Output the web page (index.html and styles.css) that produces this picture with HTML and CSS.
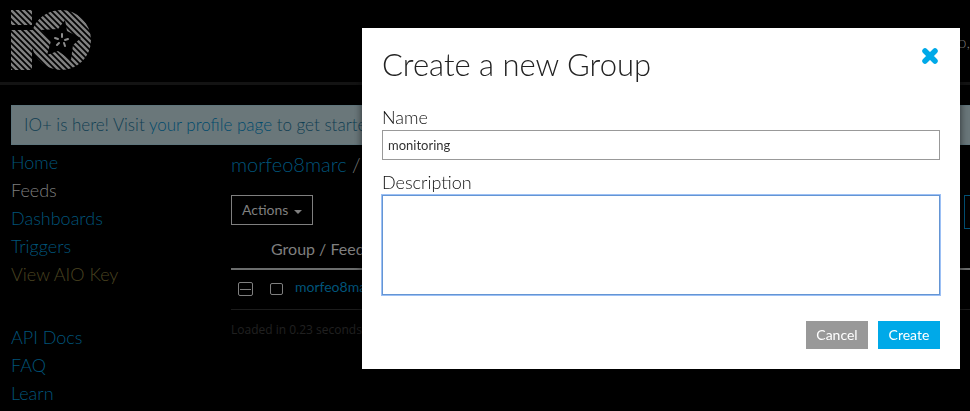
FILE: index.html
```html
<!DOCTYPE html>
<html lang="en">
<head>
<meta charset="utf-8">
<title>Create a new Group</title>
<link rel="stylesheet" href="styles.css">
</head>
<body>
<div class="page">
  <header class="topbar">
    <a class="logo" href="#" aria-label="IO home">
      <svg width="80" height="60" viewBox="0 0 80 60">
        <defs>
          <pattern id="stripes" width="6" height="6" patternUnits="userSpaceOnUse">
            <path d="M-6 -6L12 12M-6 0L6 12M0 -6L12 6" stroke="#808080" stroke-width="2.5"/>
          </pattern>
        </defs>
        <path fill="url(#stripes)" d="M0 0H21V15H0ZM0 20H26L21 40V60H0ZM50 0A30 30 0 1 1 50 60A30 30 0 0 1 21 37V22A30 30 0 0 1 50 0Z"/>
        <path fill="#000" d="M54 10L56 21L70 28L62 35L60 50L47 41L36 45L40 31L30 20L47 19Z"/>
        <g stroke="#8c8c8c" stroke-width="2" stroke-linecap="round">
          <path d="M51 24L51 27M57 29L54 30M53 33L54 36M48 33L46 35M44 28L47 29"/>
        </g>
      </svg>
    </a>
    <span class="greeting">Hello,</span>
  </header>
  <div class="content">
    <p class="notice">IO+ is here! Visit <a href="#">your profile page</a> to get started.</p>
    <div class="columns">
      <nav class="sidebar">
        <ul>
          <li><a href="#">Home</a></li>
          <li><a class="current" href="#">Feeds</a></li>
          <li><a href="#">Dashboards</a></li>
          <li><a href="#">Triggers</a></li>
          <li><a class="key" href="#">View AIO Key</a></li>
        </ul>
        <ul>
          <li><a href="#">API Docs</a></li>
          <li><a href="#">FAQ</a></li>
          <li><a href="#">Learn</a></li>
        </ul>
      </nav>
      <main class="feeds">
        <h2><a href="#">morfeo8marc</a> /</h2>
        <div class="tools">
          <button class="actions" type="button">Actions <span class="caret"></span></button>
          <button class="help" type="button" aria-label="Help"></button>
        </div>
        <table>
          <thead><tr><th></th><th></th><th>Group / Feed</th></tr></thead>
          <tbody><tr>
            <td class="toggle"><button class="collapse" type="button" aria-label="Collapse"></button></td>
            <td class="pick"><input type="checkbox" aria-label="Select group"></td>
            <td class="group"><a href="#">morfeo8marc</a></td>
          </tr></tbody>
        </table>
        <p class="loaded">Loaded in 0.23 seconds</p>
      </main>
    </div>
  </div>
</div>
<div class="overlay">
  <form class="dialog" role="dialog" aria-labelledby="dialog-title">
    <div class="dialog-head">
      <h1 id="dialog-title">Create a new Group</h1>
      <button class="close" type="button" aria-label="Close">
        <svg width="20" height="18" viewBox="0 0 20 18"><path d="M5 3L15 13M15 3L5 13" stroke="#00a9e8" stroke-width="5.5" stroke-linecap="round"/></svg>
      </button>
    </div>
    <label for="name">Name</label>
    <input id="name" type="text" value="monitoring">
    <label for="description">Description</label>
    <textarea id="description"></textarea>
    <div class="dialog-foot">
      <button class="btn cancel" type="button">Cancel</button>
      <button class="btn create" type="submit">Create</button>
    </div>
  </form>
</div>
</body>
</html>
```
FILE: styles.css
```css
* { box-sizing: border-box; }
body {
  margin: 0;
  background: #000;
  color: #7f7f7f;
  font: 300 18px/28px Lato, "Open Sans", sans-serif;
  overflow: hidden;
}
a { color: #00547a; text-decoration: none; }
h1, h2, p, ul { margin: 0; padding: 0; font-weight: 300; }
ul { list-style: none; }
button, input, textarea { font: inherit; border-radius: 0; }

.topbar {
  display: flex;
  justify-content: space-between;
  align-items: flex-start;
  padding: 10px 0 12px 11px;
  border-bottom: 3px solid #131313;
}
.logo, .logo svg { display: block; }
.greeting { padding-top: 18px; font-size: 16px; white-space: nowrap; }
.content { padding: 20px 0 0 11px; }
.notice {
  padding: 5px 12px;
  border: 1px solid #5f757c;
  border-right: 0;
  background: #6a777a;
  color: #103e52;
  font-size: 17px;
}
.notice a { color: #004a6c; }
.columns { display: flex; gap: 20px; padding-top: 3px; }
.sidebar { flex: 0 0 200px; }
.sidebar ul + ul { margin-top: 35px; }
.sidebar .current { color: #7f7f7f; }
.sidebar .key { color: #4b4420; }
.feeds { flex: 1; }
.feeds h2 { font-size: 20px; line-height: 32px; }
.tools { display: flex; justify-content: space-between; margin-top: 15px; }
.actions {
  display: flex;
  align-items: center;
  gap: 6px;
  height: 30px;
  padding: 0 10px;
  border: 1px solid #7f7f7f;
  background: none;
  color: #7f7f7f;
  font-size: 14px;
  font-weight: 400;
}
.caret {
  margin-top: 4px;
  border: 4px solid transparent;
  border-top-color: #7f7f7f;
  border-bottom: 0;
}
.help { width: 6px; height: 34px; padding: 0; border: 1px solid #00547a; border-right: 0; background: none; }
table { width: 100%; border-collapse: collapse; }
th { padding: 6px 0 5px; border-bottom: 2px solid #6b6d6d; text-align: left; font-size: 16px; font-weight: 400; }
th:last-child { position: relative; left: -24px; }
td { height: 40px; padding: 0; border-bottom: 1px solid #1c1c1c; font-size: 14px; font-weight: 400; }
.toggle { width: 39px; padding-left: 7px; }
.pick { width: 25px; }
.group { padding-bottom: 4px; }
.collapse, .pick input {
  display: block;
  margin: 0;
  border: 1px solid #7f7f7f;
  border-radius: 2px;
  background: none;
  appearance: none;
}
.collapse { width: 15px; height: 14px; padding: 0 1px; }
.collapse::before { content: ""; display: block; height: 1px; background: #7f7f7f; }
.pick input { width: 13px; height: 12px; }
.loaded { padding-top: 6px; color: #202020; font-family: "Open Sans", sans-serif; font-size: 12px; font-weight: 400; }

.overlay {
  position: fixed;
  inset: 0;
  display: flex;
  justify-content: flex-end;
  align-items: flex-start;
  padding: 28px 10px;
}
.dialog {
  flex: 0 1 598px;
  padding: 20px;
  background: #fff;
  color: #111;
  box-shadow: 0 0 8px rgba(0, 0, 0, 0.6);
}
.dialog-head { display: flex; justify-content: space-between; align-items: flex-start; margin-bottom: 23px; }
.dialog h1 { font-size: 31px; line-height: 33px; color: #222; }
.close { padding: 0; border: 0; background: none; }
.close svg { display: block; }
.dialog label { display: block; line-height: 26px; }
.dialog input, .dialog textarea { display: block; width: 100%; border: 1px solid #999; background: #fff; color: #333; }
.dialog input { height: 30px; margin-bottom: 9px; padding: 0 5px; font-size: 13px; font-weight: 400; }
.dialog textarea { height: 100px; resize: none; border-color: #6495d4; outline: 1px solid #9cc0f5; }
.dialog-foot { display: flex; justify-content: flex-end; gap: 10px; margin-top: 26px; }
.btn { min-width: 62px; height: 28px; padding: 0 10px; border: 0; color: #fff; font-size: 14px; font-weight: 400; }
.cancel { background: #999; }
.create { background: #00a9e8; }
```
